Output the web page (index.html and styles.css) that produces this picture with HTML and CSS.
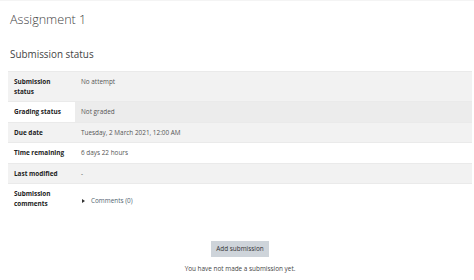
FILE: index.html
```html
<!doctype html>
<html lang="en">
  <head>
    <meta charset="UTF-8" />
    <meta name="viewport" content="width=device-width, initial-scale=1.0" />
    <title>Assignment 1</title>
    <link rel="stylesheet" href="styles.css">
  </head>
  <body>
    <div class="page">
      <h2 class="title">Assignment 1</h2>
      <h3 class="section-title">Submission status</h3>
      <table class="status-table">
        <tr class="striped">
          <th>Submission<br />status</th>
          <td>No attempt</td>
        </tr>
        <tr>
          <th>Grading status</th>
          <td class="not-graded">Not graded</td>
        </tr>
        <tr class="striped">
          <th>Due date</th>
          <td>Tuesday, 2 March 2021, 12:00 AM</td>
        </tr>
        <tr>
          <th>Time remaining</th>
          <td>6 days 22 hours</td>
        </tr>
        <tr class="striped">
          <th>Last modified</th>
          <td>-</td>
        </tr>
        <tr>
          <th>Submission<br />comments</th>
          <td class="comments-cell">
            <a class="comments-link" href="#"><span class="caret"></span>Comments (0)</a>
          </td>
        </tr>
      </table>
      <div class="actions">
        <button class="add-btn">Add submission</button>
        <p class="note">You have not made a submission yet.</p>
      </div>
    </div>
  </body>
</html>
```

FILE: styles.css
```css
body {
  margin: 0;
  font-family: "Open Sans", "Noto Sans", sans-serif;
  color: #444;
  background: #fff;
  border-top: 1px solid #f4f4f4;
}
.page {
  padding: 0 2px 0 8px;
}
.title {
  margin: 0;
  padding: 9px 0 0 2px;
  font-size: 12.6px;
  font-weight: 300;
  line-height: 20px;
  color: #444;
}
.section-title {
  margin: 0;
  padding: 17px 0 0 2px;
  font-size: 9.9px;
  font-weight: 400;
  line-height: 14px;
  color: #444;
}
.status-table {
  width: 100%;
  margin-top: 10px;
  border-collapse: collapse;
  font-size: 6.4px;
}
.status-table th,
.status-table td {
  text-align: left;
  vertical-align: top;
  padding: 5px 6px 5px;
  line-height: 9.5px;
  border-top: 1px solid #eaeaea;
}
.status-table th {
  width: 55px;
  font-weight: 700;
  color: #222;
}
.status-table td {
  color: #555;
}
.striped th,
.striped td {
  background: #f2f2f2;
}
.status-table td.not-graded {
  background: #ececec;
}
.status-table td.comments-cell {
  padding: 12px 6px 13px;
}
.comments-link {
  color: #4f6470;
  text-decoration: none;
}
.caret {
  display: inline-block;
  width: 0;
  height: 0;
  margin: 0 6px 0 1px;
  border-top: 2.5px solid transparent;
  border-bottom: 2.5px solid transparent;
  border-left: 3.5px solid #333;
}
.actions {
  text-align: center;
  padding-top: 15px;
}
.add-btn {
  font-family: inherit;
  font-size: 6.4px;
  color: #333;
  background: #ced4da;
  border: none;
  padding: 4px 5px;
  line-height: 8px;
}
.note {
  margin: 7px 0 0;
  font-size: 6.4px;
  color: #444;
}
```
